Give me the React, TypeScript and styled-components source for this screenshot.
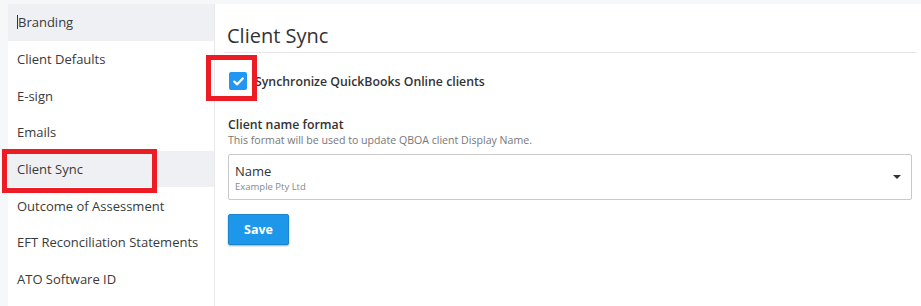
import React from "react";
import styled, { createGlobalStyle } from "styled-components";

const Global = createGlobalStyle`
  html, body { margin: 0; padding: 0; }
  body {
    font-family: "Open Sans", "Liberation Sans", Arial, sans-serif;
    background: #f6f7f9;
    color: #333;
  }
`;

const Page = styled.div`
  position: relative;
  display: flex;
  height: 306px;
  padding: 4px 0 0 8px;
  box-sizing: border-box;
  background: #f6f7f9;
  overflow: hidden;
`;

const Sidebar = styled.nav`
  width: 206px;
  flex: none;
  background: #fff;
  display: flex;
  flex-direction: column;
`;

const NavItem = styled.div<{ $active?: boolean }>`
  height: 36.7px;
  flex: none;
  display: flex;
  align-items: center;
  padding-left: 9px;
  font-size: 13px;
  color: #3a3a3a;
  background: ${(p) => (p.$active ? "#eff0f4" : "#fff")};
`;

const TextCaret = styled.span`
  display: inline-block;
  width: 1px;
  height: 14px;
  background: #333;
`;

const Content = styled.main`
  flex: 1;
  background: #fff;
  border-left: 1px solid #e9e9e9;
  padding: 0 4px 0 9px;
  display: flex;
  flex-direction: column;
`;

const Header = styled.div`
  margin-top: 18px;
  padding: 0 0 2px 3px;
  border-bottom: 1px solid #e6e6e6;
`;

const Title = styled.h1`
  margin: 0;
  font-size: 20px;
  line-height: 28px;
  font-weight: 400;
  color: #333;
`;

const Body = styled.div`
  padding: 0 5px 0 4px;
  display: flex;
  flex-direction: column;
`;

const CheckRow = styled.label`
  display: flex;
  align-items: center;
  gap: 8px;
  margin-top: 19px;
  font-size: 12.3px;
  font-weight: 600;
  color: #333;
`;

const CheckBox = styled.span`
  width: 18px;
  height: 18px;
  border-radius: 2px;
  background: #2196f3;
  margin-left: 1px;
  display: flex;
  align-items: center;
  justify-content: center;
`;

const FieldLabel = styled.div`
  margin-top: 26px;
  font-size: 12.3px;
  font-weight: 600;
  line-height: 17px;
  color: #333;
`;

const FieldHint = styled.div`
  font-size: 10.6px;
  line-height: 14px;
  color: #777;
`;

const Select = styled.div`
  position: relative;
  margin-top: 7px;
  height: 46px;
  box-sizing: border-box;
  border: 1px solid #c9c9c9;
  border-radius: 2px;
  padding: 7px 6px 0;
  display: flex;
  flex-direction: column;
`;

const SelectValue = styled.div`
  font-size: 13px;
  line-height: 18px;
  color: #333;
`;

const SelectSub = styled.div`
  font-size: 9.5px;
  line-height: 14px;
  color: #888;
`;

const DropCaret = styled.span`
  position: absolute;
  right: 10px;
  top: 20px;
  width: 0;
  height: 0;
  border-left: 4px solid transparent;
  border-right: 4px solid transparent;
  border-top: 4px solid #333;
`;

const SaveButton = styled.button`
  margin-top: 14px;
  width: 61px;
  height: 31px;
  box-sizing: border-box;
  background: #1c97ea;
  border: 1px solid #1a86d0;
  border-radius: 2px;
  box-shadow: 0 1px 2px rgba(0, 0, 0, 0.35);
  color: #fff;
  font-family: "Open Sans", "Liberation Sans", Arial, sans-serif;
  font-weight: 700;
  font-size: 12.5px;
  padding: 0;
`;

const Highlight = styled.div<{ $x: number; $y: number; $w: number; $h: number }>`
  position: absolute;
  left: ${(p) => p.$x}px;
  top: ${(p) => p.$y}px;
  width: ${(p) => p.$w}px;
  height: ${(p) => p.$h}px;
  box-sizing: border-box;
  border: 5px solid #ed1c24;
  pointer-events: none;
`;

const items = [
  "Branding",
  "Client Defaults",
  "E-sign",
  "Emails",
  "Client Sync",
  "Outcome of Assessment",
  "EFT Reconciliation Statements",
  "ATO Software ID",
];

export default function App() {
  return (
    <>
      <Global />
      <Page>
        <Sidebar>
          {items.map((it, i) => (
            <NavItem key={it} $active={i === 0 || it === "Client Sync"}>
              {i === 0 && <TextCaret />}
              {it}
            </NavItem>
          ))}
        </Sidebar>
        <Content>
          <Header>
            <Title>Client Sync</Title>
          </Header>
          <Body>
            <CheckRow>
              <CheckBox>
                <svg width="11" height="9" viewBox="0 0 11 9">
                  <path
                    d="M1.3 4.6 L4.2 7.3 L9.7 1.5"
                    fill="none"
                    stroke="#fff"
                    strokeWidth="2.3"
                    strokeLinecap="round"
                    strokeLinejoin="round"
                  />
                </svg>
              </CheckBox>
              Synchronize QuickBooks Online clients
            </CheckRow>
            <FieldLabel>Client name format</FieldLabel>
            <FieldHint>This format will be used to update QBOA client Display Name.</FieldHint>
            <Select>
              <SelectValue>Name</SelectValue>
              <SelectSub>Example Pty Ltd</SelectSub>
              <DropCaret />
            </Select>
            <div>
              <SaveButton>Save</SaveButton>
            </div>
          </Body>
        </Content>
        <Highlight $x={2} $y={149} $w={155} $h={44} />
        <Highlight $x={206} $y={55} $w={51} $h={46} />
      </Page>
    </>
  );
}
